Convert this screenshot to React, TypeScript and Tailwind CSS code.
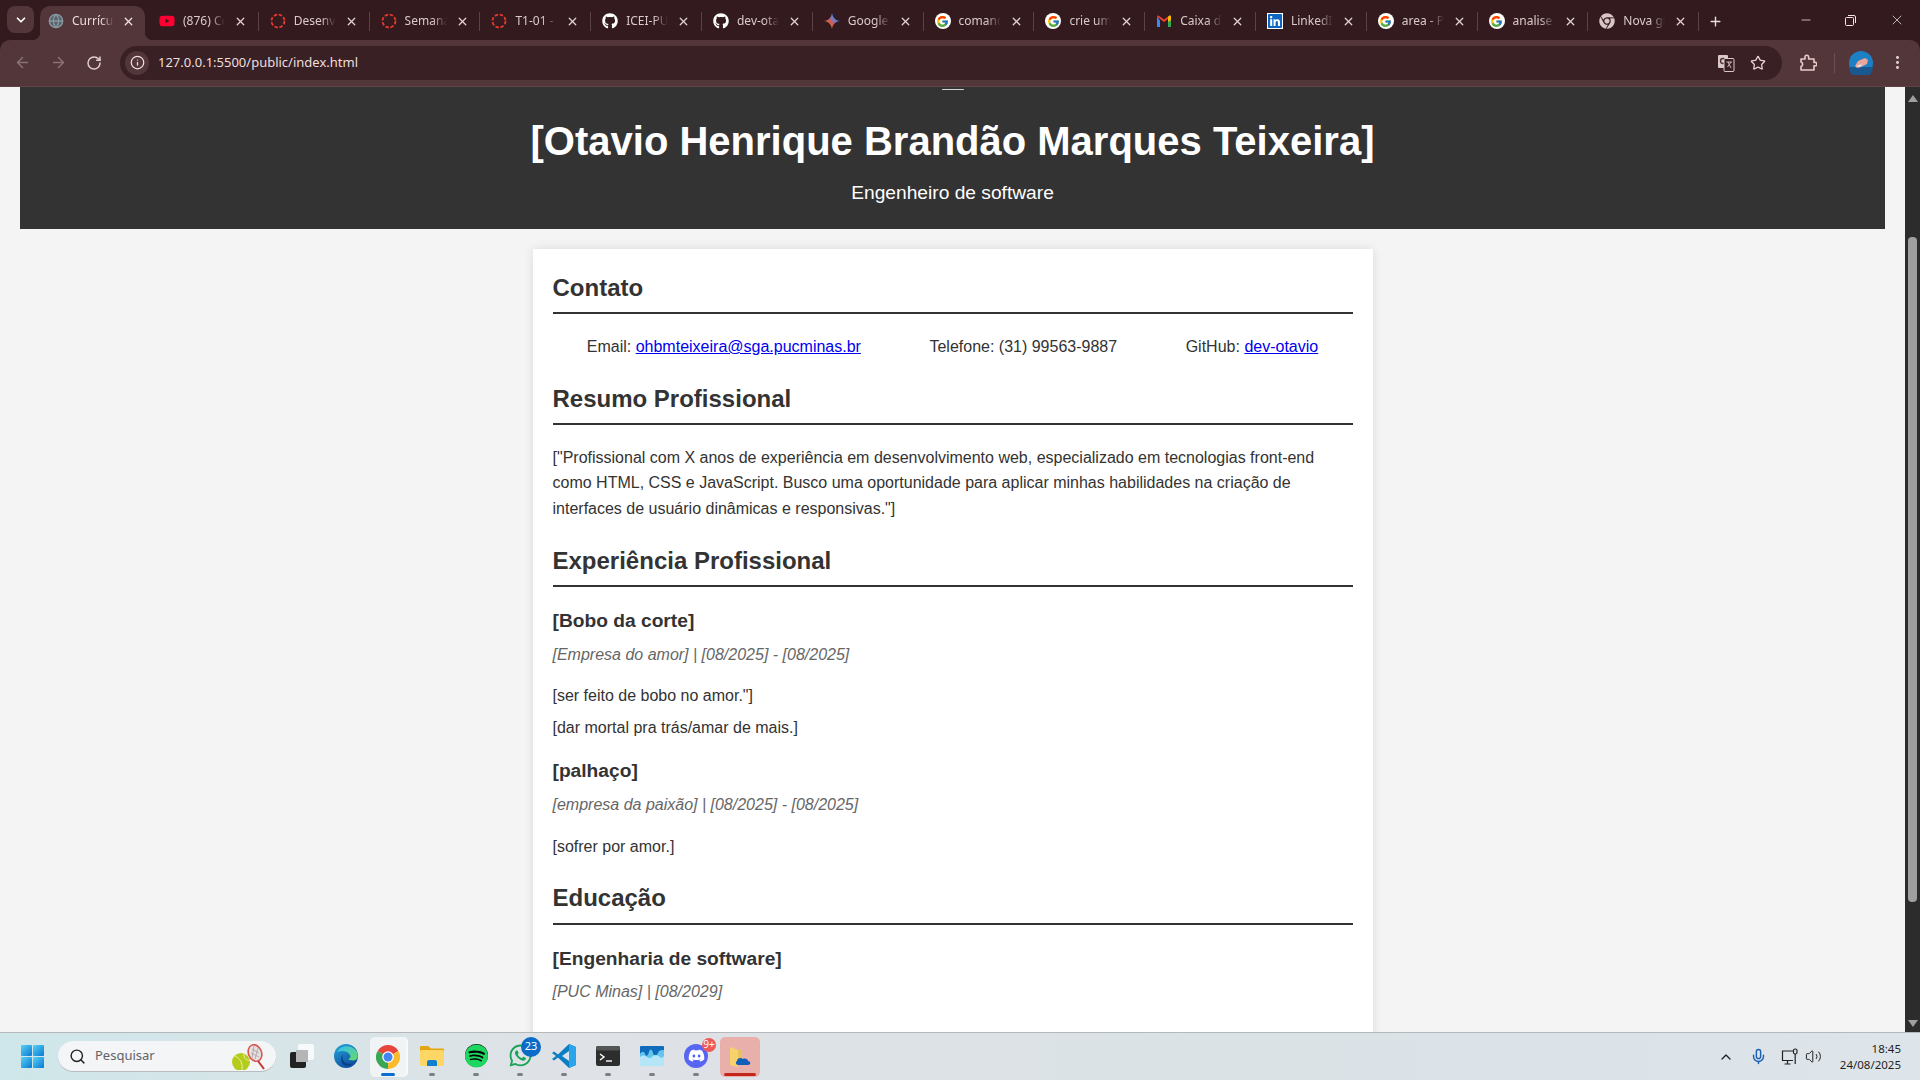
import React from "react";
import {
  ArrowLeft,
  ArrowRight,
  ChevronDown,
  ChevronUp,
  EllipsisVertical,
  Globe,
  Info,
  Mic,
  Minus,
  Plus,
  RotateCw,
  Search,
  Star,
  Volume2,
  X,
} from "lucide-react";
import { FaChrome, FaDiscord, FaGithub, FaLinkedin, FaSpotify, FaWhatsapp, FaYoutube } from "react-icons/fa";
import { FcGoogle } from "react-icons/fc";

const Google = () => (
  <span className="flex h-4 w-4 items-center justify-center rounded-full bg-white">
    <FcGoogle size={13} />
  </span>
);

const Loading = () => (
  <svg width="16" height="16" viewBox="0 0 16 16" fill="none">
    <circle cx="8" cy="8" r="6.5" stroke="#e8392c" strokeWidth="1.8" strokeDasharray="3.4 1.7" />
  </svg>
);

const Gemini = () => (
  <svg width="16" height="16" viewBox="0 0 16 16">
    <defs>
      <linearGradient id="gem" x1="0" y1="1" x2="1" y2="0">
        <stop offset="0" stopColor="#e8b93a" />
        <stop offset="0.4" stopColor="#d9584a" />
        <stop offset="0.7" stopColor="#4a8af4" />
        <stop offset="1" stopColor="#4a8af4" />
      </linearGradient>
    </defs>
    <path d="M8 0C8.6 4.5 11.5 7.4 16 8C11.5 8.6 8.6 11.5 8 16C7.4 11.5 4.5 8.6 0 8C4.5 7.4 7.4 4.5 8 0Z" fill="url(#gem)" />
  </svg>
);

const Gmail = () => (
  <svg width="16" height="16" viewBox="0 0 16 16">
    <path d="M1 3.5V14h3V7.5Z" fill="#4285f4" />
    <path d="M15 3.5V14h-3V7.5Z" fill="#34a853" />
    <path d="M1 3.5 8 9l7-5.5-1-1.3L8 6.6 2 2.2Z" fill="#ea4335" />
    <path d="M12 3.8 14 2.2l1 1.3V7l-3 2Z" fill="#fbbc04" />
  </svg>
);

const tabs = [
  { title: "(876) Como", icon: <FaYoutube size={16} color="#ff0033" /> },
  { title: "Desenvolvimento", icon: <Loading /> },
  { title: "Semana 01", icon: <Loading /> },
  { title: "T1-01 - Pro", icon: <Loading /> },
  { title: "ICEI-PUC", icon: <FaGithub size={16} color="#ffffff" /> },
  { title: "dev-otavio", icon: <FaGithub size={16} color="#ffffff" /> },
  { title: "Google Gemini", icon: <Gemini /> },
  { title: "comando", icon: <Google /> },
  { title: "crie um", icon: <Google /> },
  { title: "Caixa de", icon: <Gmail /> },
  { title: "LinkedIn", icon: <FaLinkedin size={16} color="#0a66c2" className="bg-white" /> },
  { title: "area - Pesquisa", icon: <Google /> },
  { title: "analise", icon: <Google /> },
  { title: "Nova guia", icon: <FaChrome size={16} color="#d9c5c5" /> },
];

function Tab({ title, icon }: { title: string; icon: React.ReactNode }) {
  return (
    <div className="relative flex h-[34px] w-[110.8px] shrink-0 items-center pb-[4px] pl-[11px]">
      <span className="flex h-4 w-4 shrink-0 items-center justify-center">{icon}</span>
      <span className="ml-2 w-[42px] overflow-hidden whitespace-nowrap text-[12px] text-[#dccaca] [mask-image:linear-gradient(to_right,black_65%,transparent)]">
        {title}
      </span>
      <X size={13} strokeWidth={2.4} color="#e3d2d2" className="ml-[9px] shrink-0" />
      <span className="absolute right-0 top-[6px] h-[19px] w-[1px] bg-[#5c4246]" />
    </div>
  );
}

function TitleBar() {
  return (
    <div className="flex h-[40px] shrink-0 bg-[#331a1e] pt-[6px]">
      <div className="ml-[7px] flex h-[27px] w-[27px] items-center justify-center rounded-lg bg-[#52363a]">
        <ChevronDown size={14} strokeWidth={3} color="#ffffff" />
      </div>
      <div className="relative ml-[6px] flex h-[34px] w-[105px] shrink-0 items-center rounded-t-[10px] bg-[#52363a] pb-[4px] pl-[8px]">
        <Globe size={16} color="#8a979f" fill="#55646e" className="shrink-0" />
        <span className="ml-2 w-[42px] overflow-hidden whitespace-nowrap text-[12px] text-[#eadada] [mask-image:linear-gradient(to_right,black_70%,transparent)]">
          Currículo
        </span>
        <X size={13} strokeWidth={2.4} color="#f0e2e2" className="ml-[8px] shrink-0" />
        <span className="absolute -right-[8px] bottom-0 h-2 w-2 bg-[radial-gradient(circle_at_100%_0,transparent_8px,#52363a_8.5px)]" />
        <span className="absolute -left-[8px] bottom-0 h-2 w-2 bg-[radial-gradient(circle_at_0_0,transparent_8px,#52363a_8.5px)]" />
      </div>
      <div className="ml-[3px] flex">
        {tabs.map((t) => (
          <Tab key={t.title} title={t.title} icon={t.icon} />
        ))}
      </div>
      <div className="ml-[6px] flex h-[30px] w-[20px] items-center justify-center">
        <Plus size={15} strokeWidth={2.2} color="#ecdcdc" />
      </div>
      <div className="ml-auto flex h-[28px] items-center">
        <div className="flex w-[46px] justify-center pl-[2px]">
          <Minus size={14} strokeWidth={1.3} color="#f3e6e6" />
        </div>
        <div className="flex w-[46px] justify-center pr-[2px]">
          <svg width="11" height="11" viewBox="0 0 11 11" fill="none" stroke="#f3e6e6">
            <rect x="0.5" y="2.5" width="8" height="8" rx="1" />
            <path d="M3 0.5H9A1.5 1.5 0 0 1 10.5 2V8" />
          </svg>
        </div>
        <div className="flex w-[46px] justify-center">
          <X size={16} strokeWidth={1.1} color="#f3e6e6" />
        </div>
      </div>
    </div>
  );
}

function Translate() {
  return (
    <svg width="18" height="18" viewBox="0 0 18 18">
      <rect x="1" y="1" width="10" height="13" rx="1" fill="#d8c8c8" />
      <circle cx="6" cy="7" r="2.5" fill="none" stroke="#4a2e32" strokeWidth="1.3" />
      <rect x="7" y="4.5" width="10" height="13" rx="1" fill="#3a2024" stroke="#d8c8c8" />
      <path d="M9.5 8h5.5M11 8l3 6M14 8l-3.5 5" stroke="#d8c8c8" strokeWidth="0.9" fill="none" />
    </svg>
  );
}

function Avatar() {
  return (
    <svg width="24" height="24" viewBox="0 0 24 24">
      <circle cx="12" cy="12" r="12" fill="#1d7fc4" />
      <path d="M0 16a12 12 0 0 0 24 0Z" fill="#18588f" />
      <path d="M6 15 9 10l7-3 3 2-1 4-6 3-4 1Z" fill="#eba59a" />
      <path d="M7 15l6-2-2 3Z" fill="#dfeaf2" />
    </svg>
  );
}

function Toolbar() {
  return (
    <div className="flex h-[47px] shrink-0 items-center rounded-t-[10px] border-b border-[#5f4347] bg-[#52363a] pb-[1px]">
      <div className="ml-[4px] flex w-[36px] justify-center">
        <ArrowLeft size={17} color="#8b7375" />
      </div>
      <div className="flex w-[36px] justify-center">
        <ArrowRight size={17} color="#8b7375" />
      </div>
      <div className="flex w-[36px] justify-center">
        <RotateCw size={16} strokeWidth={2.2} color="#e0cfcf" />
      </div>
      <div className="ml-[8px] flex h-[34px] flex-1 items-center rounded-full bg-[#392024] pl-[5px] pr-[16px]">
        <div className="flex h-[24px] w-[24px] items-center justify-center rounded-full bg-[#52363a]">
          <Info size={15} color="#f0e2e2" />
        </div>
        <span className="ml-[9px] pt-[1px] text-[13px] text-[#ecdfdf]">127.0.0.1:5500/public/index.html</span>
        <div className="ml-auto flex items-center gap-[15px]">
          <Translate />
          <Star size={16} strokeWidth={1.9} color="#e6d4d4" />
        </div>
      </div>
      <div className="flex w-[138px] items-center pl-[17px]">
        <svg width="18" height="18" viewBox="0 0 18 18" fill="none" stroke="#eccaca" strokeWidth="1.6">
          <path d="M2 5h4V3a1.8 1.8 0 0 1 3.6 0v2H15v3.4h1.2a1.7 1.7 0 0 1 0 3.4H15V16H2v-3.6a2.3 2.3 0 0 0 0-4.4Z" strokeLinejoin="round" />
        </svg>
        <span className="ml-[17px] h-[20px] w-[1px] bg-[#6b4f53]" />
        <span className="ml-[14px]">
          <Avatar />
        </span>
        <EllipsisVertical size={17} strokeWidth={2.2} color="#e6d4d4" className="ml-[16px]" />
      </div>
    </div>
  );
}

function SectionTitle({ children, className }: { children: React.ReactNode; className?: string }) {
  return (
    <h2 className={`border-b-2 border-[#333333] pb-[5px] text-[24px] font-bold leading-[38.4px] text-[#333333] ${className ?? ""}`}>
      {children}
    </h2>
  );
}

function Job({ role, place, className }: { role: string; place: string; className: string }) {
  return (
    <>
      <h3 className={`text-[19.2px] font-bold leading-[30.7px] text-[#333333] ${className}`}>{role}</h3>
      <p className="mt-[5px] italic leading-[25.6px] text-[#666666]">{place}</p>
    </>
  );
}

function Resume() {
  return (
    <div className="flex-1 overflow-hidden bg-[#f4f4f4] px-[20px] font-['Liberation_Sans',Arial,sans-serif] text-[16px] text-[#333333]">
      <header className="relative bg-[#333333] pb-[20px] pt-[22px] text-center text-white">
        <span className="absolute left-1/2 top-[2px] h-[1px] w-[22px] -translate-x-1/2 rounded-full bg-[#d5d5d5]" />
        <h1 className="text-[40px] font-bold leading-[64px]">[Otavio Henrique Brandão Marques Teixeira]</h1>
        <p className="mt-[5px] text-[19.2px] leading-[30.7px]">Engenheiro de software</p>
      </header>
      <main className="mx-auto mt-[20px] w-[840px] bg-white px-[20px] pb-[60px] pt-[20px] shadow-[0_0_10px_rgba(0,0,0,0.1)]">
        <SectionTitle>Contato</SectionTitle>
        <div className="mt-[20px] flex justify-around leading-[25.6px]">
          <span>
            Email:{" "}
            <a href="#contato" className="text-[#0000ee] underline">
              ohbmteixeira@sga.pucminas.br
            </a>
          </span>
          <span>Telefone: (31) 99563-9887</span>
          <span>
            GitHub:{" "}
            <a href="#github" className="text-[#0000ee] underline">
              dev-otavio
            </a>
          </span>
        </div>
        <SectionTitle className="mt-[20px]">Resumo Profissional</SectionTitle>
        <p className="mt-[19.5px] leading-[25.6px]">
          ["Profissional com X anos de experiência em desenvolvimento web, especializado em tecnologias front-end como
          HTML, CSS e JavaScript. Busco uma oportunidade para aplicar minhas habilidades na criação de interfaces de
          usuário dinâmicas e responsivas."]
        </p>
        <SectionTitle className="mt-[20.5px]">Experiência Profissional</SectionTitle>
        <Job role="[Bobo da corte]" place="[Empresa do amor] | [08/2025] - [08/2025]" className="mt-[19px]" />
        <p className="mt-[15.5px] leading-[25.6px]">[ser feito de bobo no amor."]</p>
        <p className="mt-[6px] leading-[25.6px]">[dar mortal pra trás/amar de mais.]</p>
        <Job role="[palhaço]" place="[empresa da paixão] | [08/2025] - [08/2025]" className="mt-[16px]" />
        <p className="mt-[16px] leading-[25.6px]">[sofrer por amor.]</p>
        <SectionTitle className="mt-[20px]">Educação</SectionTitle>
        <Job role="[Engenharia de software]" place="[PUC Minas] | [08/2029]" className="mt-[19px]" />
      </main>
    </div>
  );
}

function Scrollbar() {
  return (
    <div className="flex w-[15px] shrink-0 flex-col items-center bg-[#2c2c2c]">
      <div className="mt-[8px] h-0 w-0 border-x-[5px] border-b-[7px] border-x-transparent border-b-[#9f9f9f]" />
      <div className="mt-[135px] h-[665px] w-[9px] rounded-[4px] bg-[#9f9f9f]" />
      <div className="mb-[5px] mt-auto h-0 w-0 border-x-[5px] border-t-[7px] border-x-transparent border-t-[#9f9f9f]" />
    </div>
  );
}

function StartIcon() {
  return (
    <svg width="23" height="23" viewBox="0 0 23 23">
      <defs>
        <linearGradient id="win" x1="0" y1="0" x2="1" y2="1">
          <stop offset="0" stopColor="#57d2f5" />
          <stop offset="1" stopColor="#0a78d4" />
        </linearGradient>
      </defs>
      <rect x="0" y="0" width="11" height="11" rx="1" fill="url(#win)" />
      <rect x="12" y="0" width="11" height="11" rx="1" fill="url(#win)" />
      <rect x="0" y="12" width="11" height="11" rx="1" fill="url(#win)" />
      <rect x="12" y="12" width="11" height="11" rx="1" fill="url(#win)" />
    </svg>
  );
}

function TennisIcon() {
  return (
    <svg width="36" height="26" viewBox="0 0 36 26">
      <circle cx="9" cy="18" r="9" fill="#b5cc1d" />
      <path d="M3 12c5 2 8 7 7 14M12 9.500c-1 4 2 7 6 7" stroke="#e8f0a0" strokeWidth="1" fill="none" />
      <ellipse cx="23" cy="9" rx="6.500" ry="8.500" transform="rotate(-22 23 9)" fill="#e6e0e0" stroke="#d9534f" strokeWidth="1.600" />
      <path d="M20 5l7 4M19 9l8 4M22 2l-2 12M26 4l-3 11" stroke="#a9a0a0" strokeWidth="0.800" />
      <path d="M26 17l6 8" stroke="#c8352e" strokeWidth="2" />
    </svg>
  );
}

function TaskView() {
  return (
    <span className="relative block h-[24px] w-[24px]">
      <span className="absolute bottom-0 left-0 h-[16px] w-[16px] rounded-[2px] bg-[#222222]" />
      <span className="absolute right-0 top-0 h-[16px] w-[16px] rounded-[2px] bg-white/80" />
      <span className="absolute left-[6px] top-[6px] h-[12px] w-[12px] bg-[#b5b5b5]" />
    </span>
  );
}

function Edge() {
  return (
    <svg width="24" height="24" viewBox="0 0 24 24">
      <defs>
        <linearGradient id="edge-a" x1="0" y1="0" x2="0.6" y2="1">
          <stop offset="0" stopColor="#27a5e0" />
          <stop offset="1" stopColor="#0c4f9c" />
        </linearGradient>
        <linearGradient id="edge-b" x1="0" y1="0" x2="1" y2="1">
          <stop offset="0" stopColor="#35c1f1" />
          <stop offset="1" stopColor="#66d86a" />
        </linearGradient>
      </defs>
      <circle cx="12" cy="12" r="12" fill="url(#edge-a)" />
      <path d="M3 8C6 1 18 0 22.500 7c2 3.500 1.500 8-1 9-3 1-7 0-7.500-1 2 0 3-2 2-4-2-4-8-5-13-3Z" fill="url(#edge-b)" />
      <path d="M9 10c-2 5 1 10 7 10 1 0 2 0 3-.5-3 3-7 2.500-9 1.500-3-2-4-7-1-11Z" fill="#0a3f87" />
    </svg>
  );
}

function Chrome() {
  return (
    <svg width="24" height="24" viewBox="0 0 24 24">
      <path d="M12 12 1.600 6A12 12 0 0 1 22.400 6Z" fill="#e8453c" />
      <path d="M12 12 22.400 6A12 12 0 0 1 12 24Z" fill="#f9bb2d" />
      <path d="M12 12 12 24A12 12 0 0 1 1.600 6Z" fill="#3aa757" />
      <circle cx="12" cy="12" r="5.800" fill="#ffffff" />
      <circle cx="12" cy="12" r="4.500" fill="#4285f4" />
    </svg>
  );
}

function Files() {
  return (
    <svg width="24" height="24" viewBox="0 0 24 24">
      <path d="M0 3a1 1 0 0 1 1-1h7l3 2.500h12a1 1 0 0 1 1 1V8H0Z" fill="#e5a50e" />
      <rect x="0" y="6" width="24" height="16" rx="1.500" fill="#fdd665" />
      <path d="M7 22v-4a2 2 0 0 1 2-2h6a2 2 0 0 1 2 2v4Z" fill="#0f7fcf" />
    </svg>
  );
}

function VsCode() {
  return (
    <svg width="24" height="24" viewBox="0 0 24 24">
      <path d="M17 0 24 3v18l-7 3L6 13.500l-4 3L0 15l4-3-4-3 2-1.500 4 3Z" fill="#0a7cc4" />
      <path d="M17 0 24 3v18l-7 3Z" fill="#2aa5ea" />
      <path d="M17 7 10 12l7 5Z" fill="#d9e2e8" />
    </svg>
  );
}

function Terminal() {
  return (
    <svg width="24" height="20" viewBox="0 0 24 20">
      <rect width="24" height="20" rx="2" fill="#2d2d2d" />
      <rect width="24" height="4.500" rx="2" fill="#555555" />
      <path d="M4 8l4 3-4 3" stroke="#ffffff" strokeWidth="1.400" fill="none" />
      <path d="M10 15h6" stroke="#ffffff" strokeWidth="1.400" />
    </svg>
  );
}

function Wave() {
  return (
    <svg width="24" height="20" viewBox="0 0 24 20">
      <rect width="24" height="20" rx="1" fill="#0f6cbd" />
      <path d="M0 8c2-3 4-3 5 0s3 2 4-2 3-3 4 1 4 3 5 0 3-3 6-3v16H0Z" fill="#63c4ee" />
      <path d="M0 11c3-2 5-2 7 0s4 1 6-1 5-1 7 1 3 0 4-1v10H0Z" fill="#b5e6f8" />
    </svg>
  );
}

function OneDriveFolder() {
  return (
    <svg width="24" height="24" viewBox="0 0 24 24">
      <path d="M2 2 10 5v17l-8-2Z" fill="#f5d26a" />
      <path d="M10 5h3v12h-3Z" fill="#e8c25a" />
      <path d="M10 20c-2 0-3-3-1-4 0-3 4-4 6-2 2-1 5 0 5 2 3 0 3 4 0 4Z" fill="#0f5fb8" />
    </svg>
  );
}

function TaskIcon({ children, running = true }: { children: React.ReactNode; running?: boolean }) {
  return (
    <div className="relative flex h-[48px] w-[44px] shrink-0 items-center justify-center pb-[2px]">
      {children}
      {running && <span className="absolute bottom-[5px] h-[3px] w-[6px] rounded-full bg-[#7c8084]" />}
    </div>
  );
}

function Taskbar() {
  return (
    <div className="flex h-[48px] shrink-0 items-center border-t border-[#b4b8ba] bg-[linear-gradient(90deg,#cfe7ea_0%,#dfe2e6_30%,#dbe2e6_60%,#dde4ea_100%)] pl-[10px] font-['Noto_Sans',sans-serif]">
      <div className="flex w-[44px] shrink-0 justify-center">
        <StartIcon />
      </div>
      <div className="relative ml-[4px] flex h-[31px] w-[218px] shrink-0 items-center rounded-full border-b border-[#b8bcc0] bg-[#f3f5f6] pl-[11px]">
        <Search size={17} strokeWidth={2} color="#222222" />
        <span className="ml-[9px] text-[13px] text-[#5f6368]">Pesquisar</span>
        <span className="absolute right-[8px] top-[3px]">
          <TennisIcon />
        </span>
      </div>
      <div className="ml-[4px] flex items-center">
        <TaskIcon running={false}>
          <TaskView />
        </TaskIcon>
        <TaskIcon running={false}>
          <Edge />
        </TaskIcon>
        <div className="relative ml-[2px] mr-[2px] flex h-[40px] w-[38px] shrink-0 items-center justify-center rounded-[5px] border-r-2 border-white/60 bg-white/60">
          <Chrome />
          <span className="absolute bottom-[1px] h-[3px] w-[14px] rounded-full bg-[#0a6fd0]" />
        </div>
        <TaskIcon>
          <Files />
        </TaskIcon>
        <TaskIcon>
          <span className="flex h-[23px] w-[23px] items-center justify-center rounded-full bg-black">
            <FaSpotify size={24} color="#1ed760" />
          </span>
        </TaskIcon>
        <TaskIcon>
          <FaWhatsapp size={25} color="#1aa35a" />
          <span className="absolute right-[1px] top-[4px] flex h-[20px] min-w-[20px] items-center justify-center rounded-full bg-[#0a6cc7] text-[11px] text-white">
            23
          </span>
        </TaskIcon>
        <TaskIcon>
          <VsCode />
        </TaskIcon>
        <TaskIcon>
          <Terminal />
        </TaskIcon>
        <TaskIcon>
          <Wave />
        </TaskIcon>
        <TaskIcon>
          <span className="flex h-[24px] w-[24px] items-center justify-center rounded-full bg-[#5865f2]">
            <FaDiscord size={17} color="#ffffff" />
          </span>
          <span className="absolute right-[2px] top-[5px] flex h-[14px] min-w-[14px] items-center justify-center rounded-full bg-[#ee5a5a] text-[10px] text-white">
            9+
          </span>
        </TaskIcon>
        <div className="relative ml-[2px] flex h-[40px] w-[40px] shrink-0 items-center justify-center rounded-[5px] bg-[#e9b0ab]">
          <OneDriveFolder />
          <span className="absolute bottom-[1px] h-[3px] w-[32px] rounded-full bg-[#c4251c]" />
        </div>
      </div>
      <div className="ml-auto flex items-center pr-[19px]">
        <ChevronUp size={16} color="#222222" />
        <Mic size={17} color="#1a5fb4" className="ml-[16px]" />
        <svg width="18" height="18" viewBox="0 0 18 18" fill="none" stroke="#222222" strokeWidth="1.200" className="ml-[14px]">
          <path d="M12 3H1.500v9.500H12M6.500 12.500V16M3.500 16h6" />
          <rect x="12.500" y="1" width="3.500" height="5" rx="1.500" />
          <path d="M14.200 6v10" />
        </svg>
        <Volume2 size={17} strokeWidth={1.400} color="#222222" className="ml-[6px]" />
        <div className="ml-[18px] text-right text-[11.5px] leading-[16px] text-[#1f1f1f]">
          <div>18:45</div>
          <div>24/08/2025</div>
        </div>
      </div>
    </div>
  );
}

export default function App() {
  return (
    <div className="flex h-screen w-screen flex-col overflow-hidden bg-[#f4f4f4] font-['Noto_Sans',sans-serif]">
      <div className="shrink-0 bg-[#331a1e]">
        <TitleBar />
        <Toolbar />
      </div>
      <div className="flex min-h-0 flex-1">
        <Resume />
        <Scrollbar />
      </div>
      <Taskbar />
    </div>
  );
}
